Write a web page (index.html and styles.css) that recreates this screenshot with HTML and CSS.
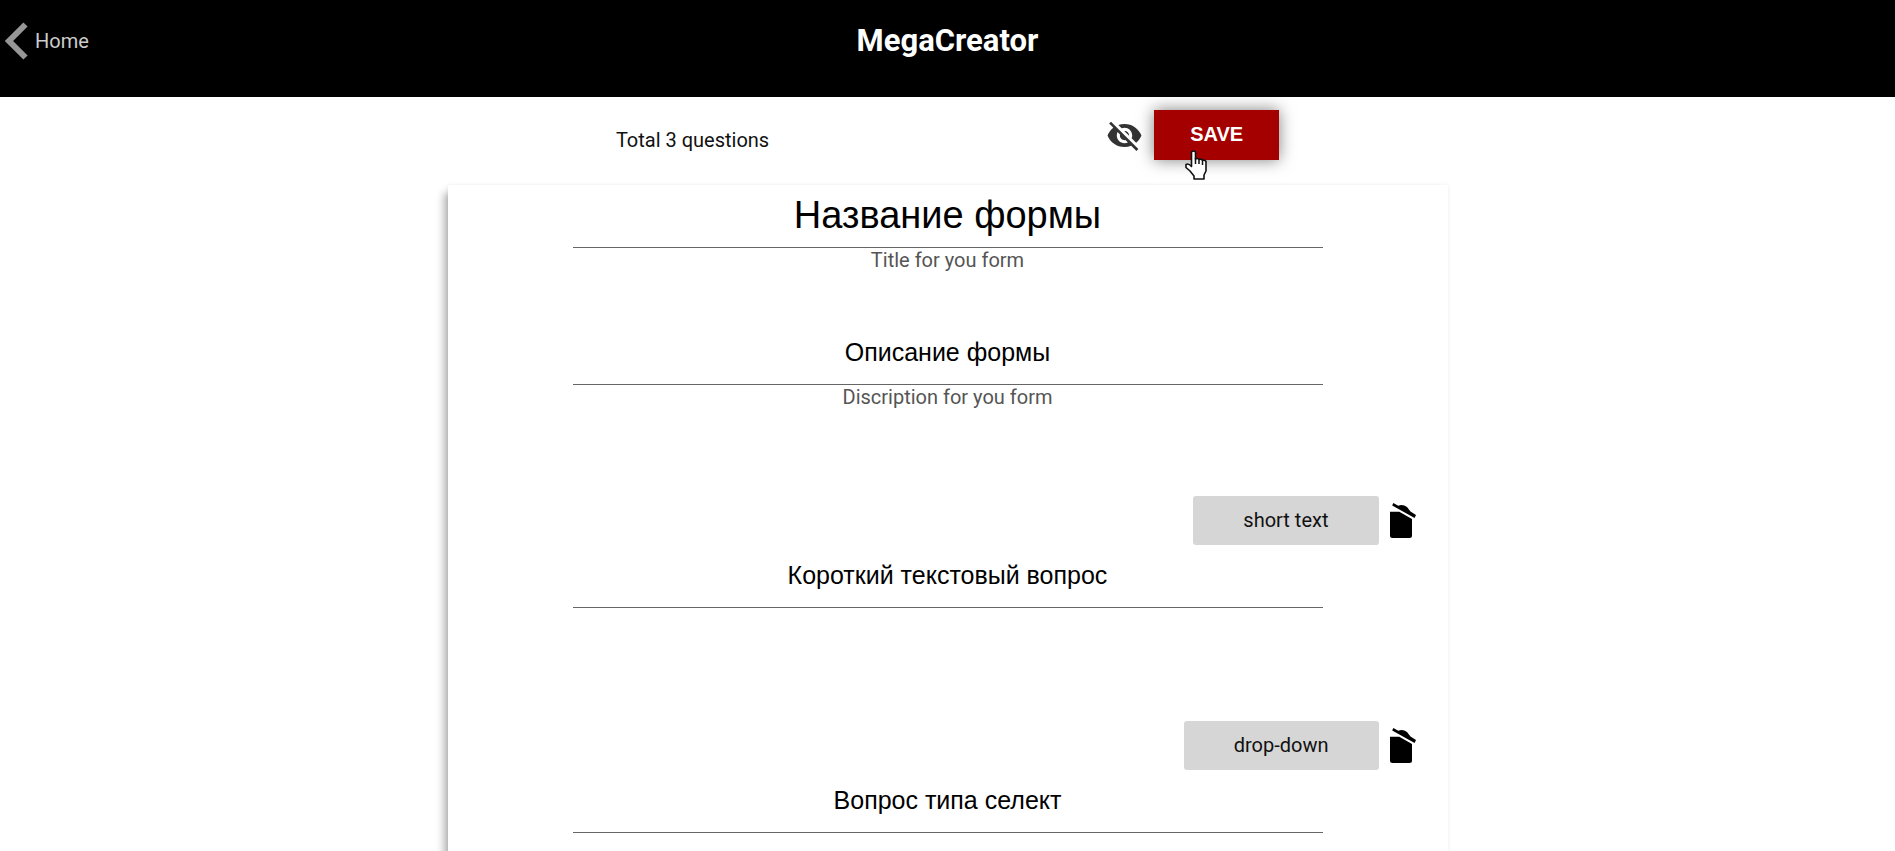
FILE: index.html
```html
<!DOCTYPE html>
<html lang="ru">
<head>
<meta charset="utf-8">
<title>MegaCreator</title>
<link rel="stylesheet" href="styles.css">
</head>
<body>
<header class="header">
  <a class="home" href="#">
    <svg class="home-icon" viewBox="0 0 24 38" aria-hidden="true"><path d="M20.500 2.500 4 19l16.500 16.500" fill="none" stroke="#969696" stroke-width="6"/></svg>
    <span>Home</span>
  </a>
  <h1 class="brand">MegaCreator</h1>
</header>
<main class="main">
  <div class="toolbar">
    <p class="total">Total 3 questions</p>
    <div class="actions">
      <button class="icon-button" type="button" aria-label="Preview">
        <svg class="eye-icon" viewBox="0 0 24 24" aria-hidden="true"><path fill="#333" d="M12 7c2.760 0 5 2.240 5 5 0 .65-.13 1.260-.36 1.830l2.920 2.920c1.510-1.260 2.700-2.890 3.430-4.750-1.730-4.390-6-7.500-11-7.500-1.400 0-2.740.25-3.980.7l2.160 2.160C10.740 7.130 11.350 7 12 7zM2 4.270l2.280 2.280.46.46C3.080 8.300 1.780 10.020 1 12c1.730 4.390 6 7.500 11 7.500 1.550 0 3.030-.3 4.380-.84l.42.42L19.730 22 21 20.730 3.270 3 2 4.270zM7.530 9.800l1.550 1.550c-.05.21-.08.43-.08.65 0 1.660 1.340 3 3 3 .22 0 .44-.03.65-.08l1.550 1.550c-.67.33-1.410.53-2.200.53-2.760 0-5-2.240-5-5 0-.79.2-1.530.53-2.200zm4.310-.78l3.150 3.150.02-.16c0-1.660-1.340-3-3-3l-.17.01z"/></svg>
      </button>
      <div class="save-wrap">
        <button class="save" type="button">SAVE</button>
        <svg class="pointer" viewBox="0 0 22 30" aria-hidden="true"><path d="M6.500 2q2-2 4 0v7q2-1.200 3.500.5 2-1 3.500.8 2.500-.6 3.500 1.200V21l-2 4v4H9v-3l-4-5-4-3.500v-3q2.500-1.500 5.500 2z" fill="#fff" stroke="#111" stroke-width="1.600" stroke-linejoin="round"/><path d="M10.500 8v6M14 9.500V14M17.500 10.500V15" stroke="#111" stroke-width="1.500"/></svg>
      </div>
    </div>
  </div>
  <form class="card">
    <div class="field">
      <input class="input input-title" id="form-title" type="text" value="Название формы">
      <label class="caption" for="form-title">Title for you form</label>
    </div>
    <div class="field">
      <input class="input" id="form-description" type="text" value="Описание формы">
      <label class="caption" for="form-description">Discription for you form</label>
    </div>
    <div class="questions">
      <section class="question">
        <div class="question-bar">
          <button class="kind" type="button">short text</button>
          <button class="icon-button" type="button" aria-label="Delete question">
            <svg class="trash-icon" viewBox="0 0 28 36" aria-hidden="true"><path d="M1 8.700h9.300L23 16v16.500q0 2.500-2.500 2.500h-17Q1 35 1 32.500zM4.300 0l5 2.700Q14 1 18 4l3.500 4.500L27 12l-1.400 3L3.200 2.500z"/></svg>
          </button>
        </div>
        <input class="input" type="text" aria-label="Question 1" value="Короткий текстовый вопрос">
      </section>
      <section class="question">
        <div class="question-bar">
          <button class="kind" type="button">drop-down</button>
          <button class="icon-button" type="button" aria-label="Delete question">
            <svg class="trash-icon" viewBox="0 0 28 36" aria-hidden="true"><path d="M1 8.700h9.300L23 16v16.500q0 2.500-2.500 2.500h-17Q1 35 1 32.500zM4.300 0l5 2.700Q14 1 18 4l3.500 4.500L27 12l-1.400 3L3.200 2.500z"/></svg>
          </button>
        </div>
        <input class="input" type="text" aria-label="Question 2" value="Вопрос типа селект">
      </section>
    </div>
  </form>
</main>
</body>
</html>
```
FILE: styles.css
```css
* { box-sizing: border-box; }

body {
  margin: 0;
  min-height: 100vh;
  background: #fff;
  color: #111;
  font: 20px/24px Roboto, "Liberation Sans", sans-serif;
}

.header {
  display: grid;
  grid-template-columns: 1fr auto 1fr;
  align-items: center;
  padding: 20px 5px 35px;
  background: #000;
}

.home {
  display: flex;
  align-items: center;
  gap: 6px;
  color: #ccc;
  text-decoration: none;
}

.home-icon { width: 24px; height: 38px; }

.brand {
  margin: 0;
  color: #fff;
  font-size: 31px;
  line-height: 42px;
  font-weight: 700;
}

.toolbar {
  display: flex;
  justify-content: space-between;
  align-items: flex-start;
  width: 35%;
  margin: 0 auto;
  padding: 13px 0 25px;
}

.total { margin: 18px 0 0; }

.actions {
  display: flex;
  align-items: center;
  gap: 11px;
}

.icon-button {
  display: flex;
  padding: 0;
  border: 0;
  background: none;
}

.eye-icon { width: 37px; height: 37px; }

.save-wrap { position: relative; }

.save {
  display: block;
  height: 50px;
  padding: 0 36px 2px;
  border: 0;
  background: #a50000;
  color: #fff;
  font: 700 20px/24px "Liberation Sans", Arial, sans-serif;
  box-shadow: 0 0 16px rgba(0, 0, 0, 0.5);
}

.pointer {
  position: absolute;
  left: 31px;
  top: 40px;
  width: 22px;
  height: 30px;
}

.card {
  display: flex;
  flex-direction: column;
  gap: 50px;
  max-width: 1000px;
  margin: 0 auto;
  padding-bottom: 50px;
  background: #fff;
  box-shadow: -7px 5px 8px -3px rgba(0, 0, 0, 0.3), 0 0 4px rgba(0, 0, 0, 0.08);
}

.field,
.question {
  display: flex;
  flex-direction: column;
  align-items: center;
}

.input {
  width: 75%;
  height: 63px;
  padding: 0 0 2px;
  border: 0;
  border-bottom: 1px solid #666;
  background: none;
  color: #000;
  font: 25px/30px "Liberation Sans", Arial, sans-serif;
  text-align: center;
  outline: 0;
}

.input-title { font-size: 38px; line-height: 44px; }

.caption { color: #555; }

.questions {
  display: flex;
  flex-direction: column;
  gap: 113px;
  padding-top: 37px;
}

.question-bar {
  display: flex;
  align-items: center;
  justify-content: flex-end;
  align-self: stretch;
  gap: 10px;
  padding-right: 31px;
}

.kind {
  height: 49px;
  padding: 0 50px 2px;
  border: 0;
  border-radius: 3px;
  background: #d6d6d6;
  color: #111;
  font: inherit;
}

.trash-icon { width: 28px; height: 36px; }
```
